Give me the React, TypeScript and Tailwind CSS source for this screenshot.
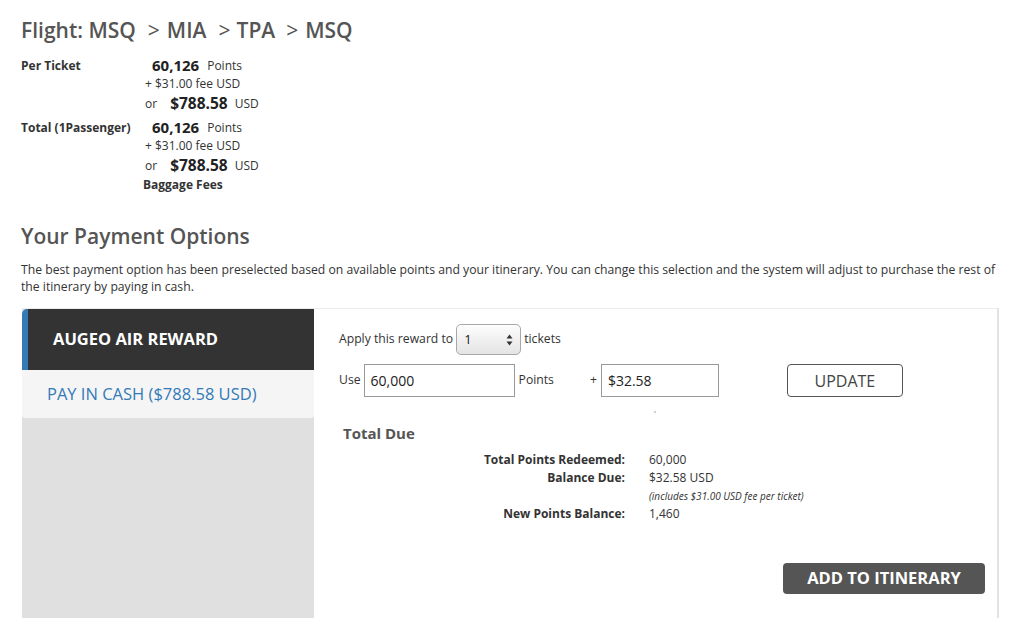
import React from "react"

function PriceBlock({ label }: { label: string }) {
  return (
    <div className="flex text-[12px]">
      <div className="w-[124px] h-[19px] flex items-center font-bold text-[#333]">{label}</div>
      <div className="text-[#333]">
        <div className="h-[19px] flex items-center pl-[7px]">
          <span className="text-[15px] font-bold text-[#222]">60,126</span>
          <span className="ml-[8px]">Points</span>
        </div>
        <div className="h-[18px] flex items-center">+ $31.00 fee USD</div>
        <div className="h-[22px] flex items-center">
          <span>or</span>
          <span className="text-[15.5px] font-bold text-[#222] ml-[13px]">$788.58</span>
          <span className="ml-[7px]">USD</span>
        </div>
      </div>
    </div>
  )
}

function TicketSelect() {
  return (
    <div className="flex items-center justify-between w-[65px] h-[31px] mx-[3px] px-[7px] rounded-[5px] border border-[#a8a8a8] bg-gradient-to-b from-[#fdfdfd] to-[#e4e4e4] shadow-[inset_0_1px_0_#fff]">
      <span className="text-[13px] text-[#222]">1</span>
      <svg width="7" height="12" viewBox="0 0 7 12">
        <path d="M3.5 0.5 L6.5 4.5 L0.5 4.5 Z" fill="#333" />
        <path d="M3.5 11.5 L6.5 7.5 L0.5 7.5 Z" fill="#333" />
      </svg>
    </div>
  )
}

export default function App() {
  return (
    <div className="min-h-[618px] bg-white pl-[21px] pt-[15px] overflow-hidden text-[#333] font-['Open_Sans','Liberation_Sans',sans-serif]">
      <h1 className="text-[21px] leading-[30px] font-semibold text-[#555] whitespace-pre">
        Flight: MSQ<span className="font-normal ml-[12px] mr-[7px]">&gt;</span>MIA
        <span className="font-normal ml-[12px] mr-[6px]">&gt;</span>TPA
        <span className="font-normal ml-[11px] mr-[7px]">&gt;</span>MSQ
      </h1>

      <div className="mt-[11px]">
        <PriceBlock label="Per Ticket" />
        <div className="mt-[3px]">
          <PriceBlock label="Total (1Passenger)" />
        </div>
        <div className="pl-[122px] h-[16px] flex items-center text-[12px] font-bold">Baggage Fees</div>
      </div>

      <h2 className="mt-[29px] text-[21px] leading-[28px] font-semibold text-[#555]">Your Payment Options</h2>
      <p className="mt-[11px] w-[978px] text-[12.2px] leading-[17px] text-[#333]">
        The best payment option has been preselected based on available points and your itinerary. You can change this selection and the system will adjust to purchase the rest of the itinerary by paying in cash.
      </p>

      <div className="mt-[13px] ml-[1px] w-[977px] h-[320px] flex border-t border-[#ececec] border-r-2 border-r-[#e3e3e3]">
        <div className="w-[292px] bg-[#e0e0e0] flex flex-col">
          <div className="h-[61px] bg-[#333] border-l-[6px] border-l-[#337ab7] rounded-tl-[5px] flex items-center pl-[25px]">
            <span className="text-white font-bold text-[16.5px]">AUGEO AIR REWARD</span>
          </div>
          <div className="h-[48px] bg-[#f5f5f5] rounded-b-[3px] flex items-center pl-[25px]">
            <span className="text-[#337ab7] text-[16.5px]">PAY IN CASH ($788.58 USD)</span>
          </div>
        </div>

        <div className="flex-1 flex flex-col pl-[25px] pt-[15px]">
          <div className="flex items-center text-[12.2px]">
            <span>Apply this reward to</span>
            <TicketSelect />
            <span>tickets</span>
          </div>

          <div className="flex items-center mt-[9px] text-[12.2px]">
            <span>Use</span>
            <div className="ml-[3px] w-[151px] h-[33px] border border-[#999] flex items-center pl-[6px] text-[14px] text-[#222]">60,000</div>
            <span className="ml-[4px]">Points</span>
            <span className="ml-[36px]">+</span>
            <div className="ml-[4px] w-[118px] h-[33px] border border-[#999] flex items-center pl-[6px] text-[14px] text-[#222]">$32.58</div>
            <div className="ml-[68px] w-[116px] h-[33px] border-[1.5px] border-[#555] rounded-[4px] flex items-center justify-center text-[16px] text-[#444]">UPDATE</div>
          </div>

          <div className="ml-[315px] mt-[14px] w-[2px] h-[2px] bg-[#cfcfcf]" />

          <h3 className="ml-[4px] mt-[10px] text-[15px] leading-[20px] font-bold text-[#555]">Total Due</h3>

          <div className="ml-[4px] mt-[8px] grid grid-cols-[282px_1fr] gap-x-[24px] text-[12px] leading-[18px]">
            <div className="text-right font-bold">Total Points Redeemed:</div>
            <div>60,000</div>
            <div className="text-right font-bold">Balance Due:</div>
            <div>$32.58 USD</div>
            <div />
            <div className="italic text-[10px]">(includes $31.00 USD fee per ticket)</div>
            <div className="text-right font-bold">New Points Balance:</div>
            <div>1,460</div>
          </div>

          <div className="flex justify-end pr-[12px] mt-[40px]">
            <div className="w-[202px] h-[31px] bg-[#555] rounded-[4px] flex items-center justify-center text-white font-bold text-[16.5px]">ADD TO ITINERARY</div>
          </div>
        </div>
      </div>
    </div>
  )
}
